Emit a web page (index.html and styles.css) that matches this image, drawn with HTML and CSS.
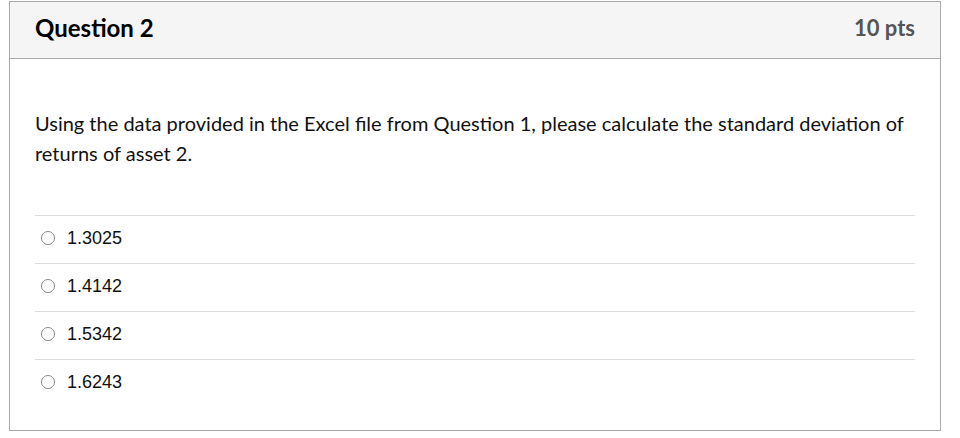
FILE: index.html
```html
<!DOCTYPE html>
<html>
<head>
<meta charset="utf-8">
<link rel="stylesheet" href="styles.css">
</head>
<body>
<div class="question">
  <div class="q-header">
    <h2 class="q-title">Question 2</h2>
    <span class="q-pts">10 pts</span>
  </div>
  <div class="q-body">
    <p class="q-text">Using the data provided in the Excel file from Question 1, please calculate the standard deviation of returns of asset 2.</p>
    <div class="answers">
      <label class="answer"><span class="radio"></span><span class="a-text">1.3025</span></label>
      <label class="answer"><span class="radio"></span><span class="a-text">1.4142</span></label>
      <label class="answer"><span class="radio"></span><span class="a-text">1.5342</span></label>
      <label class="answer"><span class="radio"></span><span class="a-text">1.6243</span></label>
    </div>
  </div>
</div>
</body>
</html>
```
FILE: styles.css
```css
html, body {
  margin: 0;
  padding: 0;
  background: #fff;
}
body {
  font-family: Lato, "Liberation Sans", sans-serif;
  color: #2d3b45;
}
.question {
  margin: 1px 0 0 9px;
  width: 930px;
  height: 428px;
  border: 1px solid #aaaaaa;
  box-sizing: content-box;
}
.q-header {
  display: flex;
  justify-content: space-between;
  align-items: center;
  height: 51px;
  padding: 0 25px 5px 25px;
  background: #f5f5f5;
  border-bottom: 1px solid #aaaaaa;
}
.q-title {
  margin: 0;
  font-size: 24px;
  font-weight: 700;
  color: #000;
}
.q-pts {
  font-size: 22px;
  font-weight: 700;
  color: #555;
}
.q-body {
  padding: 49px 25px 0 25px;
}
.q-text {
  margin: 0;
  font-size: 20px;
  line-height: 30px;
  color: #111;
}
.answers {
  margin-top: 47px;
}
.answer {
  display: flex;
  align-items: center;
  height: 44px;
  padding-bottom: 3px;
  border-top: 1px solid #dddddd;
}
.radio {
  width: 12px;
  height: 12px;
  border: 1px solid #8a8a8a;
  border-radius: 50%;
  margin-left: 6px;
  margin-right: 12px;
  box-sizing: content-box;
}
.a-text {
  font-family: "Liberation Sans", Arial, sans-serif;
  font-size: 18px;
  color: #111;
}
```
